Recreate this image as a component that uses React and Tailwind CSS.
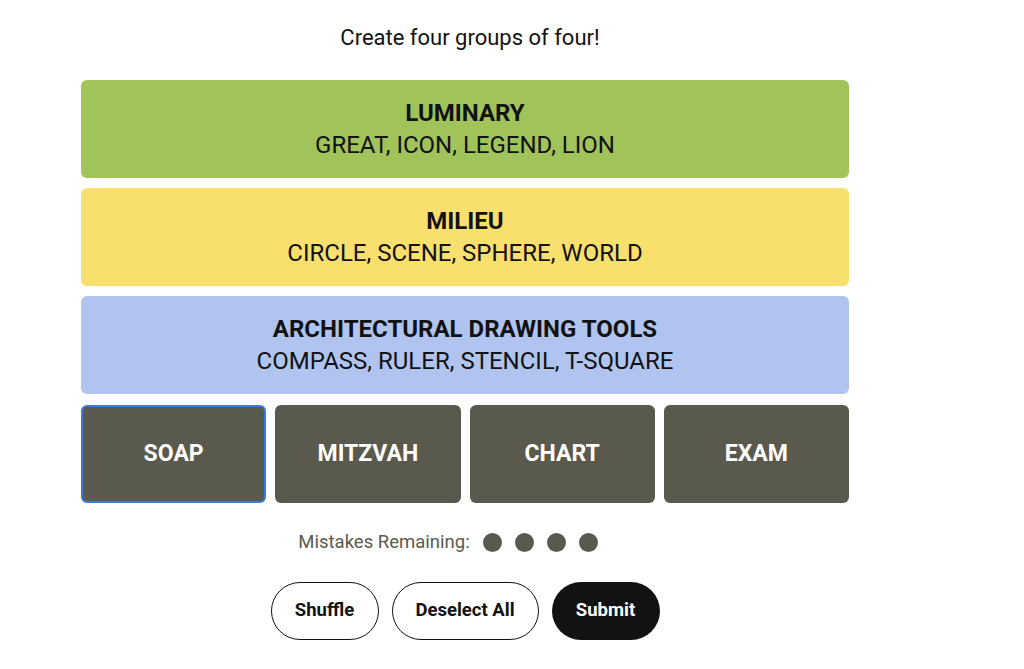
import React, { useState } from "react";

// Solved groups shown above the remaining tiles
const solved = [
  { title: "LUMINARY", words: "GREAT, ICON, LEGEND, LION", color: "bg-[#a0c35a]" },
  { title: "MILIEU", words: "CIRCLE, SCENE, SPHERE, WORLD", color: "bg-[#f9df6d]" },
  { title: "ARCHITECTURAL DRAWING TOOLS", words: "COMPASS, RULER, STENCIL, T-SQUARE", color: "bg-[#b0c4ef]" },
];

const SolvedRow = ({ title, words, color }) => (
  <div className={`${color} h-[98px] rounded-[6px] flex flex-col items-center justify-center text-[#121212]`}>
    <div className="text-[24px] font-bold leading-[32px]">{title}</div>
    <div className="text-[24px] leading-[32px]">{words}</div>
  </div>
);

const Tile = ({ word, selected, onClick }) => (
  <button
    onClick={onClick}
    className={`h-[98px] rounded-[6px] bg-[#5a594e] text-white text-[23px] font-bold flex items-center justify-center ${
      selected ? "border-2 border-[#3a7bd5]" : "border-2 border-transparent"
    }`}
  >
    {word}
  </button>
);

export default function App() {
  const [selected, setSelected] = useState(["SOAP"]);
  const tiles = ["SOAP", "MITZVAH", "CHART", "EXAM"];

  const toggle = (w) =>
    setSelected((prev) => (prev.includes(w) ? prev.filter((x) => x !== w) : [...prev, w]));

  return (
    <div className="min-h-screen bg-white" style={{ fontFamily: "Roboto, 'Liberation Sans', sans-serif" }}>
      <div className="ml-[81px] w-[768px] flex flex-col items-center pt-[24px]">
        <p className="text-[22px] leading-[28px] text-[#121212] mb-[28px] ml-[10px]">Create four groups of four!</p>

        {/* Board */}
        <div className="w-full flex flex-col gap-[10px]">
          {solved.map((g) => (
            <SolvedRow key={g.title} {...g} />
          ))}
          <div className="grid grid-cols-4 gap-[9px] mt-[1px]">
            {tiles.map((w) => (
              <Tile key={w} word={w} selected={selected.includes(w)} onClick={() => toggle(w)} />
            ))}
          </div>
        </div>

        {/* Mistakes */}
        <div className="flex items-center h-[20px] mt-[29px] -ml-[34px]">
          <span className="text-[18.5px] leading-[20px] text-[#5a594e] mr-[13px]">Mistakes Remaining:</span>
          <div className="flex gap-[13px]">
            {[0, 1, 2, 3].map((i) => (
              <span key={i} className="w-[19px] h-[19px] rounded-full bg-[#5a594e]" />
            ))}
          </div>
        </div>

        {/* Controls */}
        <div className="flex gap-[13px] mt-[30px]">
          <button className="w-[108px] h-[58px] rounded-full border border-[#121212] text-[18.5px] font-bold text-[#121212]">
            Shuffle
          </button>
          <button className="w-[147px] h-[58px] rounded-full border border-[#121212] text-[18.5px] font-bold text-[#121212]">
            Deselect All
          </button>
          <button className="w-[108px] h-[58px] rounded-full bg-[#121212] text-[18.5px] font-bold text-white">
            Submit
          </button>
        </div>
      </div>
    </div>
  );
}
